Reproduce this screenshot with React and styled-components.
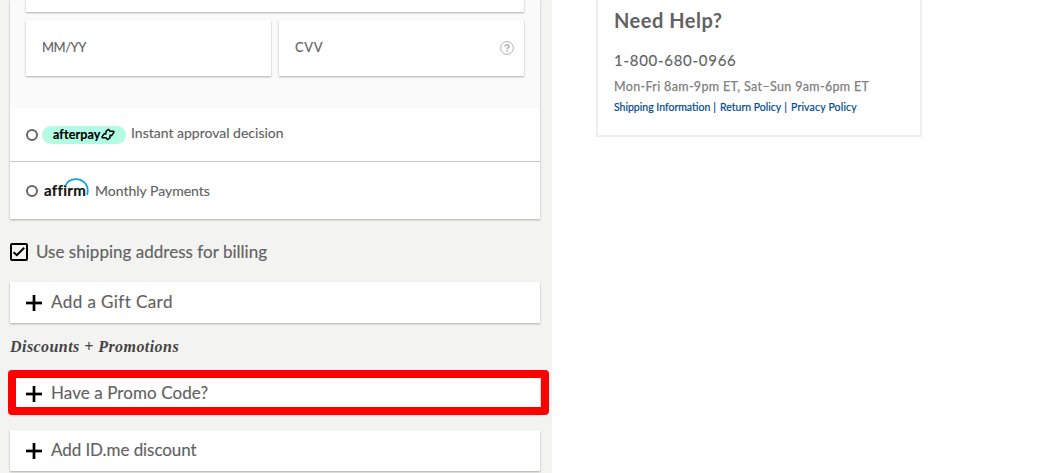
import React from 'react';

import styled, { createGlobalStyle, css } from 'styled-components';

const GRAY = '#626262';
const LIGHT_GRAY = '#808080';
const BLUE = '#004b91';
const RED = '#ff0000';
const MINT = '#b2fce4';

export default function App() {
  return(
    <>
      <GlobalStyle/>
      <Page>
        <Payment>
          <MethodsCard>
            <CardForm>
              <NumberField/>
              <Field spacing="-.5px">MM/YY</Field>
              <Field spacing=".6px">
                CVV
                <HelpIcon/>
              </Field>
            </CardForm>
            <Method>
              <Radio/>
              <AfterpayBadge>
                afterpay
                <AfterpayLoop/>
              </AfterpayBadge>
              <MethodText>Instant approval decision</MethodText>
            </Method>
            <Method $bordered>
              <Radio/>
              <AffirmLogo/>
              <MethodText $bordered>Monthly Payments</MethodText>
            </Method>
          </MethodsCard>

          <Billing>
            <CheckedBox/>
            <BillingText>Use shipping address for billing</BillingText>
          </Billing>

          <Expander spacing=".42px" label="Add a Gift Card"/>
          <SectionTitle>Discounts + Promotions</SectionTitle>
          <Expander spacing=".08px" label="Have a Promo Code?" highlighted/>
          <Expander spacing="-.07px" label="Add ID.me discount"/>
        </Payment>

        <HelpBox>
          <HelpTitle>Need Help?</HelpTitle>
          <Phone>1-800-680-0966</Phone>
          <Hours>Mon-Fri 8am-9pm ET, Sat–Sun 9am-6pm ET</Hours>
          <Links>
            <Link>Shipping Information</Link>
            <Divider>|</Divider>
            <Link>Return Policy</Link>
            <Divider>|</Divider>
            <Link $spacing=".18px">Privacy Policy</Link>
          </Links>
        </HelpBox>
      </Page>
    </>
  );
};

function Expander({ label, spacing, highlighted }) {
  return(
    <ExpanderCard $highlighted={ highlighted }>
      <PlusIcon/>
      <ExpanderText spacing={ spacing }>{ label }</ExpanderText>
      { highlighted && <Highlight/> }
    </ExpanderCard>
  );
}

function HelpIcon() {
  return(
    <svg width="14" height="14" viewBox="0 0 14 14" fill="none" stroke="#b0b0b0">
      <circle cx="7" cy="7" r="6.4"/>
      <path d="M5 5.6C5 4.4 5.8 3.8 7 3.8s2 .7 2 1.7c0 1.2-1.8 1.2-1.8 2.7" strokeWidth="1.6"/>
      <path d="M6.4 10h1.6" strokeWidth="1.6"/>
    </svg>
  );
}

function PlusIcon() {
  return(
    <svg width="16" height="16" viewBox="0 0 16 16">
      <path d="M7 0h2v7h7v2h-7v7h-2v-7h-7v-2h7z" stroke="#000" strokeWidth=".7"/>
    </svg>
  );
}

function CheckedBox() {
  return(
    <svg width="18" height="18" viewBox="0 0 18 18" fill="none" stroke="#000" strokeWidth="2">
      <rect x="1" y="1" width="16" height="16" rx="1" fill="#f3f3f1"/>
      <path d="M3.6 9.2L6.8 12.2L14.2 4.8" strokeWidth="2"/>
    </svg>
  );
}

function AfterpayLoop() {
  return(
    <LoopSvg width="14" height="13" viewBox="0 0 14 13" fill="none" stroke="#000" strokeWidth="1.5">
      <path d="M5.2 5.4L5 3.6Q5 3 5.7 2.6L7.6 1.4L9 3.2H12.4Q13.4 3.6 12.7 4.6L10.6 7.6L8.6 7"/>
      <path d="M8.8 7.6L9 9.4Q9 10 8.3 10.4L6.4 11.6L5 9.8H1.6Q.6 9.4 1.3 8.4L3.4 5.6L5.4 6.2"/>
    </LoopSvg>
  );
}

function AffirmLogo() {
  return(
    <Affirm>
      affirm
      <AffirmArc width="26" height="18" viewBox="0 0 26 18" fill="none" stroke="#1a9fec" strokeWidth="1.8">
        <path d="M1.2 8C3.2 3.6 7.3 1.2 12 1.2C18.6 1.2 23.7 6 23.7 12.4Q23.7 14.8 23 17"/>
      </AffirmArc>
    </Affirm>
  );
}

const GlobalStyle = createGlobalStyle`
  * {
    box-sizing: border-box;
  }

  body {
    margin: 0;
    background-color: #fff;
    color: ${ GRAY };
    font-family: Lato, sans-serif;
    -webkit-text-stroke: .15px;
  }

  svg {
    display: block;
    flex-shrink: 0;
  }
`;

const cardShadow = css`
  background-color: #fff;
  box-shadow: 0 1px 2px rgba(0, 0, 0, .3);
`;

const Page = styled.div`
  display: flex;
  align-items: flex-start;
  gap: 44px;
  height: 473px;
  overflow: hidden;
`;

const Payment = styled.div`
  width: 552px;
  height: 473px;
  padding: 0 12px 0 10px;
  background-color: #f3f3f1;
`;

const MethodsCard = styled.div`
  height: 219px;
  ${ cardShadow };
`;

const CardForm = styled.div`
  display: grid;
  grid-template-columns: 1fr 1fr;
  grid-template-rows: 12px 56px;
  gap: 8px;
  height: 108px;
  padding: 0 16px;
  background-color: #fafafa;
`;

const NumberField = styled.div`
  grid-column: 1 / 3;
  ${ cardShadow };
`;

const Field = styled.div`
  display: flex;
  justify-content: space-between;
  padding: 19px 10px 0 16px;
  font-size: 13px;
  line-height: 16px;
  letter-spacing: ${ ({ spacing }) => spacing };
  ${ cardShadow };

  & > svg {
    margin-top: 2px;
  }
`;

const Method = styled.div`
  display: flex;
  align-items: center;
  height: 53px;
  padding: 0 16px;

  ${ ({ $bordered }) => $bordered && css`
    height: 58px;
    border-top: 1px solid #c8c8c8;
  ` };
`;

const Radio = styled.span`
  width: 12px;
  height: 12px;
  margin: 1px 4px 0 0;
  border: 2px solid #666;
  border-radius: 50%;
`;

const AfterpayBadge = styled.span`
  display: flex;
  width: 84px;
  height: 18px;
  margin-right: 5px;
  padding: 2px 0 0 11px;
  border-radius: 9px;
  background-color: ${ MINT };
  color: #000;
  font-size: 12.5px;
  font-weight: 700;
  line-height: 13px;
  letter-spacing: .12px;
`;

const LoopSvg = styled.svg`
  margin-left: 1px;
`;

const MethodText = styled.span`
  margin-top: -3px;
  font-size: 14px;
  line-height: 20px;

  ${ ({ $bordered }) => $bordered && css`
    margin-top: 1px;
  ` };
`;

const Affirm = styled.span`
  position: relative;
  width: 49px;
  margin: -2px 4px 0 0;
  padding-left: 2px;
  color: #111;
  font-size: 15px;
  font-weight: 700;
  line-height: 20px;
  letter-spacing: .3px;
`;

const AffirmArc = styled.svg`
  position: absolute;
  top: -2px;
  left: 22px;
`;

const Billing = styled.div`
  display: flex;
  align-items: center;
  height: 18px;
  margin: 24px 0 21px;
`;

const BillingText = styled.span`
  margin: 0 0 0 8px;
  font-size: 17px;
  line-height: 20px;
  letter-spacing: .02px;
`;

const ExpanderCard = styled.div`
  position: relative;
  display: flex;
  align-items: center;
  height: 41px;
  padding: 0 16px;
  ${ cardShadow };

  ${ ({ $highlighted }) => $highlighted && css`
    margin-bottom: 16px;
  ` };
`;

const ExpanderText = styled.span`
  margin: -1px 0 0 9px;
  font-size: 17px;
  line-height: 20px;
  letter-spacing: ${ ({ spacing }) => spacing };
`;

const Highlight = styled.span`
  position: absolute;
  inset: -3px -9px -1px -2px;
  border: 8px solid ${ RED };
  border-radius: 4px;
`;

const SectionTitle = styled.h3`
  height: 20px;
  margin: 14px 0 16px;
  color: #444;
  font: italic 700 16px/20px 'Liberation Serif', serif;
  letter-spacing: .44px;
  -webkit-text-stroke: 0;
`;

const HelpBox = styled.div`
  width: 326px;
  height: 137px;
  padding: 8px 16px 0;
  border: 2px solid #eee;
  border-top: 0;
`;

const HelpTitle = styled.h2`
  margin: 0;
  font-size: 20px;
  font-weight: 700;
  line-height: 24px;
  letter-spacing: .5px;
  -webkit-text-stroke: 0;
`;

const Phone = styled.div`
  margin-top: 18px;
  font-size: 15px;
  line-height: 20px;
  letter-spacing: .72px;
`;

const Hours = styled.div`
  margin-top: 9px;
  color: ${ LIGHT_GRAY };
  font-size: 12.5px;
  line-height: 16px;
  letter-spacing: .34px;
  -webkit-text-stroke: .25px;
`;

const Links = styled.div`
  display: flex;
  margin-top: 5px;
  color: ${ BLUE };
  font-size: 10.5px;
  line-height: 14px;
  -webkit-text-stroke: .2px;
`;

const Link = styled.a`
  color: ${ BLUE };
  letter-spacing: ${ ({ $spacing }) => $spacing || 'normal' };
`;

const Divider = styled.span`
  width: 9.8px;
  padding-left: 3px;
`;
